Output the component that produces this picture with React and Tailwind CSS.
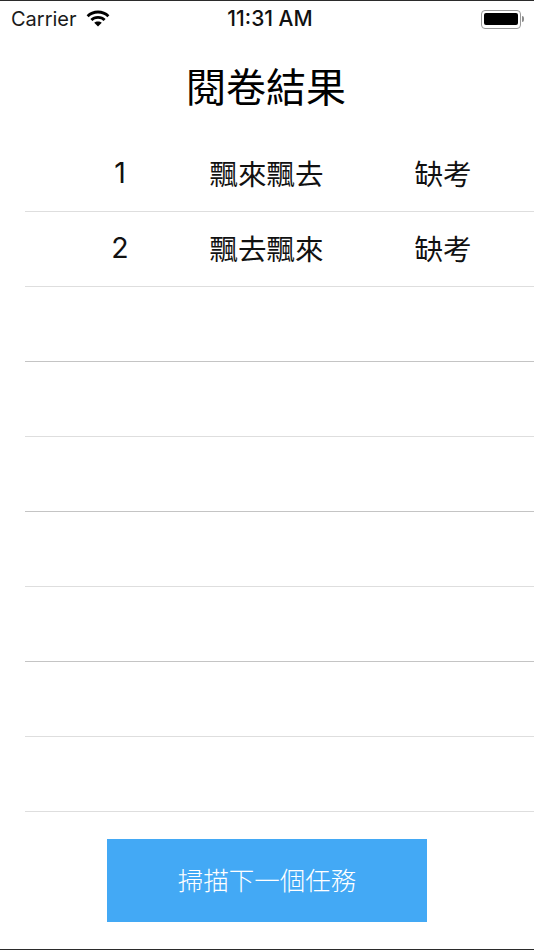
const cjk = { fontFamily: '"Noto Sans CJK TC", "Noto Sans", sans-serif' };

const rows = [
  ["1", "飄來飄去", "缺考", "border-[#dedede]"],
  ["2", "飄去飄來", "缺考", "border-[#dedede]"],
  ["", "", "", "border-[#c4c4c4]"],
  ["", "", "", "border-[#dedede]"],
  ["", "", "", "border-[#c4c4c4]"],
  ["", "", "", "border-[#dedede]"],
  ["", "", "", "border-[#c4c4c4]"],
  ["", "", "", "border-[#dedede]"],
  ["", "", "", "border-[#dedede]"],
];

function Wifi() {
  return (
    <svg width="24" height="17" viewBox="0 0 25 18" fill="none" stroke="#000" strokeWidth="3" className="ml-[9px] mb-[1px]">
      <path d="M1.5 6.5C7.5 0.6 17.5 0.6 23.5 6.5" />
      <path d="M5.5 10.5C9 7 16 7 19.5 10.5" />
      <path d="M12.5 17.5L8.5 13.6C10.5 11.8 14.5 11.8 16.5 13.6Z" fill="#000" stroke="none" />
    </svg>
  );
}

function Battery() {
  return (
    <div className="flex items-center">
      <div className="flex h-[19px] w-[40px] items-center justify-center rounded-[4px] border-[1.5px] border-[#999]">
        <div className="h-[12px] w-[34px] rounded-[2px] bg-black" />
      </div>
      <div className="ml-[1px] h-[6px] w-[2px] rounded-r-[2px] bg-[#8c8c8c]" />
    </div>
  );
}

export default function App() {
  return (
    <div className="flex h-[950px] w-[534px] flex-col overflow-hidden border-y border-[#2b2b2b] bg-white text-[#111]" style={cjk}>
      <div className="relative flex h-[36px] shrink-0 items-center justify-between pl-[11px] pr-[10px]">
        <div className="flex items-center">
          <span className="text-[20px] text-[#1a1a1a]" style={{ fontFamily: "Inter, sans-serif" }}>Carrier</span>
          <Wifi />
        </div>
        <span className="absolute left-[6px] right-0 text-center text-[21px] font-medium" style={{ fontFamily: "Inter, sans-serif" }}>11:31 AM</span>
        <Battery />
      </div>
      <h1 className="mb-[4px] flex h-[96px] shrink-0 items-center justify-center pr-[2px] text-[40px] font-normal text-black">閱卷結果</h1>
      <div className="ml-[25px] flex flex-col">
        {rows.map((r, i) => (
          <div key={i} className={`grid h-[75px] grid-cols-[108px_185px_168px] items-center border-b pb-[2px] pl-[41px] text-center text-[28.5px] font-normal ${r[3]}`}>
            <span style={{ fontFamily: "Inter, sans-serif" }}>{r[0]}</span>
            <span>{r[1]}</span>
            <span>{r[2]}</span>
          </div>
        ))}
      </div>
      <div className="flex justify-center pt-[27px]">
        <button className="h-[83px] w-[320px] bg-[#43a9f5] pb-[2px] text-[25.5px] font-light text-white">掃描下一個任務</button>
      </div>
    </div>
  );
}
